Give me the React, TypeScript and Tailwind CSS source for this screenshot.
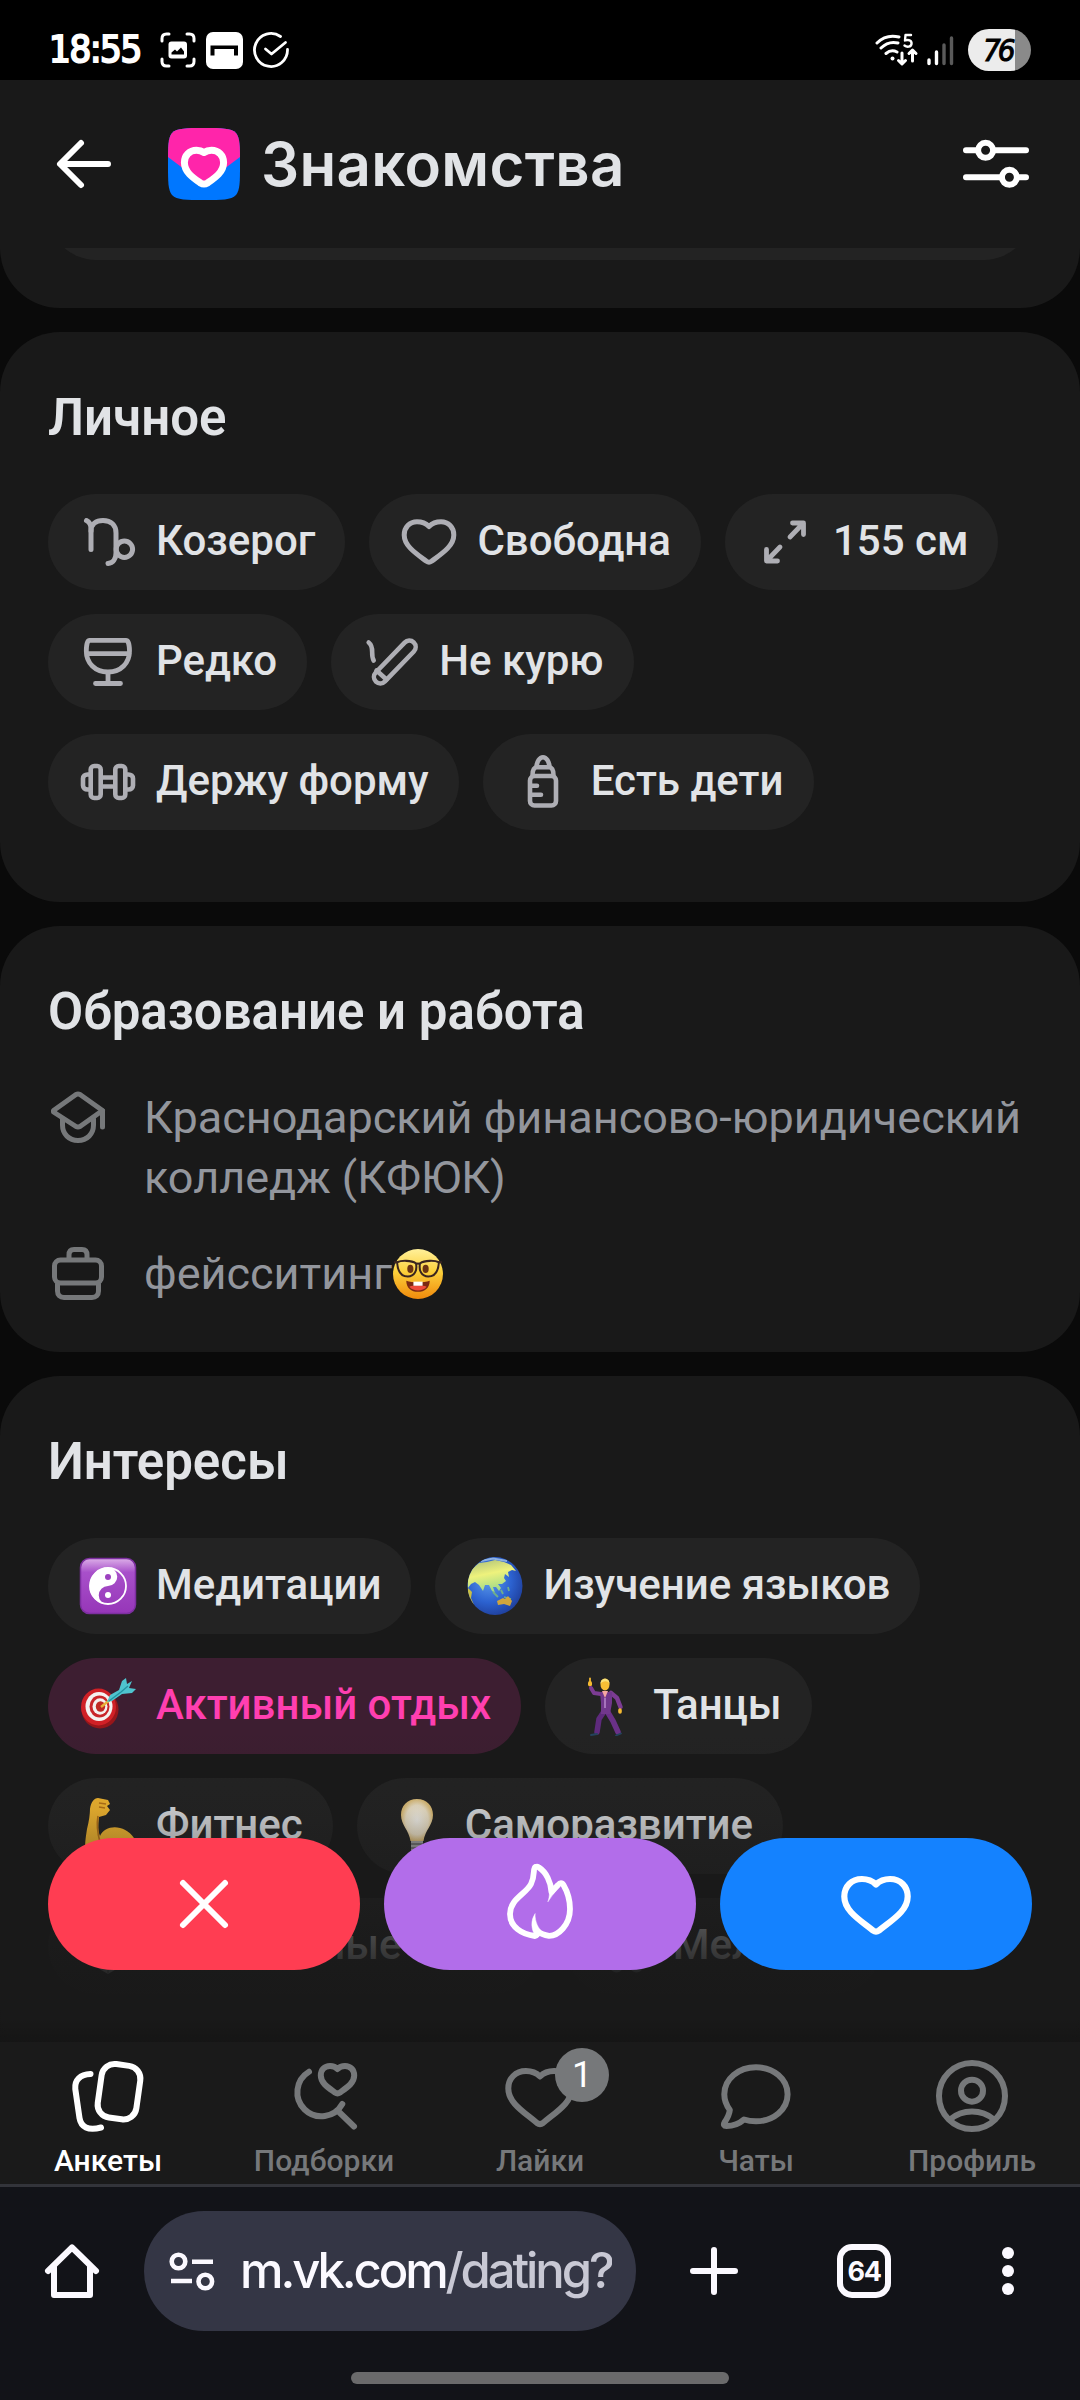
import type { ReactNode } from "react";
import clsx from "clsx";

function Svg(props: {
  w: number;
  h?: number;
  sw?: number;
  className?: string;
  children: ReactNode;
}) {
  const h = props.h ?? props.w;
  return (
    <svg
      width={props.w}
      height={h}
      viewBox={`0 0 ${props.w} ${h}`}
      fill="none"
      stroke="currentColor"
      strokeWidth={props.sw ?? 5}
      strokeLinecap="round"
      strokeLinejoin="round"
      className={clsx("shrink-0", props.className)}
    >
      {props.children}
    </svg>
  );
}

/* ---------- chip icons ---------- */

function CapricornIcon() {
  return (
    <Svg w={60}>
      <path d="M8.5 8.5C11.5 10 13 13 13 17V37.5" />
      <path d="M13 19C13 12 18 8.5 25 8.5C33 8.5 38 13 38 21V41C38 47 35 51 30 51.5" />
      <circle cx="46.4" cy="37.3" r="8.2" />
    </Svg>
  );
}

function HeartIcon() {
  return (
    <Svg w={60}>
      <path d="M30 14.5C26.5 11 22 9.8 18 9.8C10.5 9.8 5.2 15.5 5.2 23C5.2 34 17 41.5 27.5 49.3C29.2 50.5 30.8 50.5 32.5 49.3C43 41.5 54.8 34 54.8 23C54.8 15.5 49.5 9.8 42 9.8C38 9.8 33.5 11 30 14.5Z" />
    </Svg>
  );
}

function ResizeIcon() {
  return (
    <Svg w={60} sw={4.8}>
      <path d="M37.5 11H48.5V22.500M48 11.5L35 25" />
      <path d="M22.5 49H11.5V37.5M12 48.5L25 35" />
    </Svg>
  );
}

function WineIcon() {
  return (
    <Svg w={60} sw={4.8}>
      <path d="M11.5 8.3H48C50.5 8.3 51.5 14 51.5 19C51.5 31 43 40 30 40C17 40 8.3 31 8.3 19C8.3 14 9.3 8.3 11.5 8.3Z" />
      <path d="M9 21.7H51M30 41V51M17.5 51.5H42.5" />
    </Svg>
  );
}

function CigaretteIcon() {
  return (
    <Svg w={60} sw={4.6}>
      <rect x="-27.2" y="-6.4" width="54.4" height="12.8" rx="6.4" transform="translate(33.8 30) rotate(-46)" />
      <path d="M15.5 38.5L25.5 47.5" />
      <path d="M7.7 10.5C14 15.5 9 22 12.7 28.5" />
    </Svg>
  );
}

function DumbbellIcon() {
  return (
    <Svg w={60} sw={4.6}>
      <rect x="12.7" y="14" width="10" height="32" rx="3.5" />
      <rect x="37.3" y="14" width="10" height="32" rx="3.5" />
      <path d="M24 25.500H36M24 34.5H36" />
      <path d="M11.5 22.5H9.500C7 22.5 5 24 5 26.5V33.5C5 36 7 37.5 9.5 37.5H11.5" />
      <path d="M48.5 22.5H50.5C53 22.5 55 24 55 26.5V33.5C55 36 53 37.5 50.5 37.5H48.5" />
    </Svg>
  );
}

function BottleIcon() {
  return (
    <Svg w={60} sw={4.6}>
      <rect x="17" y="24" width="26" height="29.5" rx="4.5" />
      <path d="M19.5 23.5C19.5 19 20.5 15.3 24 15.3H36C39.5 15.3 40.5 19 40.5 23.5" />
      <path d="M23.5 14.5C24 9.5 26.5 5.2 30 5.2C33.5 5.2 36 9.5 36.5 14.5" />
      <path d="M18 33.7H24M18 42.7H28" />
    </Svg>
  );
}

/* ---------- emoji ---------- */

function YinYangEmoji() {
  return (
    <svg width="60" height="60" viewBox="0 0 60 60" className="shrink-0">
      <defs>
        <linearGradient id="yy" x1="0" y1="0" x2="0" y2="1">
          <stop offset="0" stopColor="#dcaee8" />
          <stop offset=".25" stopColor="#a850ca" />
          <stop offset="1" stopColor="#9636b8" />
        </linearGradient>
      </defs>
      <rect x="2.5" y="2.5" width="55" height="55" rx="9" fill="url(#yy)" stroke="#7d2fa0" strokeWidth="1.500" />
      <circle cx="30" cy="30" r="18" fill="none" stroke="#fff" strokeWidth="1.800" />
      <path d="M30 11.5A18.5 18.5 0 0 0 30 48.5A9.25 9.25 0 0 1 30 30A9.25 9.25 0 0 0 30 11.5Z" fill="#fff" />
      <circle cx="30" cy="21" r="3" fill="#9d42c0" />
      <circle cx="30" cy="39" r="3" fill="#fff" />
    </svg>
  );
}

function GlobeEmoji() {
  return (
    <svg width="60" height="60" viewBox="0 0 60 60" className="shrink-0">
      <defs>
        <radialGradient id="sea" cx=".4" cy=".4" r=".62">
          <stop offset="0" stopColor="#5d9cec" />
          <stop offset=".6" stopColor="#2c62d0" />
          <stop offset="1" stopColor="#1f3f9c" />
        </radialGradient>
        <linearGradient id="land" x1="0" y1="0" x2=".3" y2="1">
          <stop offset="0" stopColor="#a9bd7a" />
          <stop offset=".5" stopColor="#eef27c" />
          <stop offset="1" stopColor="#9fd98a" />
        </linearGradient>
        <clipPath id="globe">
          <ellipse cx="30" cy="30" rx="27.5" ry="29" />
        </clipPath>
      </defs>
      <g clipPath="url(#globe)">
        <rect width="60" height="60" fill="url(#sea)" />
        <path d="M6 14L14 7L22 6L30 4L39 6L46 9L51 15L47 14L43 16L44 21L40 18L39 22L41 25L37 28L33 28L36 32L34 35L31 31L28 31L30 37L27 35L24 29L20 29L18 35L14 29L10 26L6 28L3 32L2 22Z" fill="url(#land)" />
        <path d="M3 32L7 36L6 42L9 49L3 45Z" fill="#c9bf45" />
        <path d="M28 36L33 41M36 34L38 38M39 41L46 43M43 31L44 35" stroke="#6fae8b" strokeWidth="1.800" />
        <path d="M32 45L38 42L40 43L43 40L47 45L45 50L39 48L33 49Z" fill="#d0a53c" />
        <path d="M16 5L28 2.500L42 5" stroke="#8fb1e0" strokeWidth="2" fill="none" />
      </g>
    </svg>
  );
}

function DartEmoji() {
  return (
    <svg width="60" height="60" viewBox="0 0 60 60" className="shrink-0">
      <ellipse cx="22" cy="33.5" rx="18.5" ry="19" fill="#97161a" />
      <ellipse cx="20.5" cy="31" rx="17.5" ry="18.5" fill="#d02026" />
      <ellipse cx="21" cy="30.5" rx="13.5" ry="14.5" fill="#f4f1f0" />
      <ellipse cx="21.5" cy="30.5" rx="10" ry="11" fill="#c9252a" />
      <ellipse cx="22" cy="30.5" rx="7.500" ry="8.2" fill="#f4f1f0" />
      <ellipse cx="22.5" cy="30.5" rx="4.700" ry="5.200" fill="#c02a25" />
      <path d="M23 31L33 23" stroke="#e8b23a" strokeWidth="2.500" />
      <path d="M29 26L32 19L41 14L44 5L48 2L49 8L54 5L51 12L58 13L54 17L44 18L34 25Z" fill="#4fc4cf" />
      <path d="M31 25L43 16L50 10" stroke="#2193a2" strokeWidth="1.300" fill="none" />
    </svg>
  );
}

function DancerEmoji() {
  return (
    <svg width="60" height="60" viewBox="0 0 60 60" className="shrink-0">
      <g strokeLinecap="round" strokeLinejoin="round" fill="none">
        <path d="M15 8V2.500" stroke="#f4b931" strokeWidth="1.800" />
        <path d="M15 7V8.500" stroke="#f4b931" strokeWidth="4" />
        <path d="M16 12L19 17L26 18" stroke="#7c3c93" strokeWidth="4" />
        <path d="M36 17L42 22L45.500 31" stroke="#7c3c93" strokeWidth="4.500" />
        <path d="M45 34V36" stroke="#f4b931" strokeWidth="3.600" />
        <path d="M30 34L24 43L22 56" stroke="#5e2a7c" strokeWidth="5.500" />
        <path d="M32 35L38 45L43 56" stroke="#6a3188" strokeWidth="5.500" />
        <path d="M22 58L16 59M41 59.500L46 57.500" stroke="#24435e" strokeWidth="1.800" />
      </g>
      <path d="M25 16H37L37 27L35 38H26L26 27Z" fill="#71378c" />
      <path d="M27 15L30 22L33 15Z" fill="#f7a7a2" />
      <path d="M30 22V32" stroke="#b888cc" strokeWidth="1.500" />
      <ellipse cx="30" cy="8.5" rx="4.500" ry="6" fill="#f6bf35" />
      <path d="M25.500 8C25 1 35 1 34.500 8C33 4 27 5 25.500 8Z" fill="#f9e27a" />
    </svg>
  );
}

function BicepsEmoji() {
  return (
    <svg width="60" height="60" viewBox="0 0 60 60" className="shrink-0">
      <path d="M12 13C13 6 16 2 20 2L30 4L32 8L29 10L32 14L28 19L21 21C20 30 20 35 22 40C27 28 47 28 56 42V58H8C6 50 8 40 9 33C11 25 12 18 12 13Z" fill="#fcbd30" />
      <path d="M21 7L28 8M21 11L27 12M20 20C18 31 20 39 22 46" stroke="#bd7716" strokeWidth="1.600" fill="none" />
    </svg>
  );
}

function BulbEmoji() {
  return (
    <svg width="60" height="60" viewBox="0 0 60 60" className="shrink-0">
      <defs>
        <radialGradient id="bulb">
          <stop offset="0" stopColor="#fffdf6" />
          <stop offset=".7" stopColor="#f8ecd0" />
          <stop offset="1" stopColor="#e6c57c" />
        </radialGradient>
      </defs>
      <path d="M30 3C20 3 14 10 14 19C14 29 22 34 23.5 45H36.500C38 34 46 29 46 19C46 10 40 3 30 3Z" fill="url(#bulb)" />
      <path d="M24 45H36V54L33 58H27L24 54Z" fill="#a9a9a9" />
      <path d="M24 48H36M24 52H36" stroke="#666" strokeWidth="1.500" />
    </svg>
  );
}

function DieEmoji() {
  return (
    <svg width="60" height="60" viewBox="0 0 60 60" className="shrink-0">
      <path d="M30 3L54 14V44L30 58L6 44V14Z" fill="#d9d9dc" />
      <path d="M6 14L30 26L54 14M30 26V58" stroke="#9a9a9f" strokeWidth="2" fill="none" />
      <circle cx="30" cy="14" r="4" fill="#d3262d" />
    </svg>
  );
}

function NotesEmoji() {
  return (
    <svg width="60" height="60" viewBox="0 0 60 60" className="shrink-0">
      <path d="M26 50V16L46 10V50" stroke="#8d9aa6" strokeWidth="3.500" fill="none" />
      <ellipse cx="21.5" cy="51.5" rx="6" ry="5" fill="#8d9aa6" />
      <ellipse cx="41.5" cy="51.5" rx="6" ry="5" fill="#8d9aa6" />
    </svg>
  );
}

function NerdEmoji() {
  return (
    <svg width="52" height="52" viewBox="0 0 51 51" className="shrink-0">
      <defs>
        <linearGradient id="face" x1="0" y1="0" x2="0" y2="1">
          <stop offset="0" stopColor="#fff09a" />
          <stop offset=".45" stopColor="#fcd13b" />
          <stop offset="1" stopColor="#f08a0c" />
        </linearGradient>
      </defs>
      <circle cx="25.5" cy="25.5" r="24.5" fill="url(#face)" />
      <path d="M14 32C20 34 31 34 37 32C37 39 32 43 25.5 43C19 43 14 39 14 32Z" fill="#7c2a12" />
      <path d="M17 38C21 43 30 43 34 38C30 36 21 36 17 38Z" fill="#ee4a3a" />
      <path d="M21 33H30V37H21Z" fill="#fff" />
      <ellipse cx="18" cy="20.5" rx="3" ry="4" fill="#6b3413" />
      <ellipse cx="33" cy="20.5" rx="3" ry="4" fill="#6b3413" />
      <g fill="none" stroke="#3a2520" strokeWidth="2">
        <path d="M5 14C9 12 19 12 23.500 15C25 22 22 28 15.500 28C8 28 5.500 22 5 14Z" />
        <path d="M46 14C42 12 32 12 27.500 15C26 22 29 28 35.500 28C43 28 45.500 22 46 14Z" />
        <path d="M2 14H5M46 14H49M23.500 16C25 14.800 26 14.800 27.500 16" />
      </g>
    </svg>
  );
}

/* ---------- building blocks ---------- */

function Card(props: { title: string; className?: string; children: ReactNode }) {
  return (
    <section className={clsx("shrink-0 rounded-[60px] bg-[#191919] px-12 pt-14", props.className)}>
      <h2 className="text-[51px] leading-[60px] font-semibold text-[#e1e3e6]">{props.title}</h2>
      {props.children}
    </section>
  );
}

function Chip(props: { icon: ReactNode; label: string; active?: boolean }) {
  return (
    <div
      className={clsx(
        "flex h-24 items-center gap-[18px] rounded-full px-[30px] text-[42px] leading-[54px] font-medium whitespace-nowrap",
        props.active ? "bg-[#3d1e31] text-[#ff3fb0]" : "bg-[#232323] text-[#e1e3e6]",
      )}
    >
      <span className="text-[#aeaeb4]">{props.icon}</span>
      <span className="-mt-[3px]">{props.label}</span>
    </div>
  );
}

function ChipRow(props: { children: ReactNode }) {
  return <div className="flex gap-6">{props.children}</div>;
}

function Tab(props: { label: string; active?: boolean; icon: ReactNode; badge?: string }) {
  return (
    <div
      className={clsx(
        "flex flex-1 flex-col items-center pt-3 text-[30px] leading-9 font-medium",
        props.active ? "text-white" : "text-[#76787a]",
      )}
    >
      <div className="relative">
        {props.icon}
        {props.badge && (
          <span className="absolute -top-[6px] left-[57px] flex size-[54px] items-center justify-center rounded-full bg-[#76787a] text-[36px] font-normal text-white">
            {props.badge}
          </span>
        )}
      </div>
      <span className="mt-[5px]">{props.label}</span>
    </div>
  );
}

/* ---------- screen parts ---------- */

function StatusBar() {
  return (
    <div className="flex h-20 shrink-0 items-center bg-black px-[49px] text-white">
      <span className="mt-[17px] w-[92px] font-['DejaVu_Sans_Condensed','DejaVu_Sans',sans-serif] text-[38px] leading-[44px] tracking-[-1.3px] whitespace-nowrap [-webkit-text-stroke:2px_white]">
        18:55
      </span>
      <Svg w={36} sw={3} className="mt-5 ml-[19px]">
        <path d="M2 9V6.500Q2 2 6.500 2H9M27 2H29.500Q34 2 34 6.500V9M34 27V29.500Q34 34 29.500 34H27M9 34H6.500Q2 34 2 29.500V27" />
        <rect x="8.5" y="9.5" width="18.5" height="17" rx="3" fill="currentColor" stroke="none" />
        <path d="M11.5 22.5V20.500L15 17.500L17 19.500L21 15.500L24 19.500V22.500Z" fill="#000" stroke="none" />
      </Svg>
      <Svg w={37} sw={0} className="mt-5 ml-[10px]">
        <rect width="37" height="37" rx="7" fill="currentColor" />
        <path d="M4.5 13.5H32V23.500H28V17H8.500V23.500H4.500Z" fill="#000" />
      </Svg>
      <Svg w={37} sw={2.8} className="mt-5 ml-[10px]">
        <path d="M27.5 4.500A16.500 16.500 0 1 0 34.500 17.500" />
        <path d="M12.5 17L18.500 22L32.500 10.500" />
      </Svg>
      <div className="mt-5 ml-auto flex items-center">
        <Svg w={44} h={34} sw={3}>
          <path d="M2 10C8 4 16 2 24 4M6 15C11 10 17 8.500 23 10M11 20.500C14.500 17.500 18 17 22 19" />
          <circle cx="17.5" cy="25.5" r="2" fill="currentColor" stroke="none" />
          <path d="M27 20V30.500M23.500 27.500L27 31L30.500 27.500M37.500 28V17.500M34 20.500L37.500 17L41 20.500" />
          <path d="M36 2H30.500L30 7.500C34 6 37 8 36.500 11C36 14 32 14.500 29.500 12.500" strokeWidth="2.400" />
        </Svg>
        <Svg w={28} h={32} sw={3.4} className="ml-[7px]">
          <path d="M3 26V29.500M10.500 18V29.500" />
          <path d="M18 11V29.500M25.500 4V29.500" stroke="#5a5a5a" />
        </Svg>
        <div className="ml-[14px] flex h-[42px] w-[63px] items-center overflow-hidden rounded-full bg-[linear-gradient(90deg,#ececec_75%,#8a8a8a_75%)] pl-[15px]">
          <span className="font-['DejaVu_Sans_Condensed','DejaVu_Sans',sans-serif] text-[31px] leading-none tracking-[-3px] text-black italic [-webkit-text-stroke:1px_black]">
            76
          </span>
        </div>
      </div>
    </div>
  );
}

function Header() {
  return (
    <header className="flex h-[168px] shrink-0 items-center bg-[#191919] px-12">
      <Svg w={72} sw={6} className="text-white">
        <path d="M60 36H13M33 15L12 36L33 57" />
      </Svg>
      <svg width="72" height="72" viewBox="0 0 72 72" className="ml-12 shrink-0">
        <defs>
          <clipPath id="logo">
            <path d="M0 36C0 18 0 10 4 5C9 0 18 0 36 0S63 0 68 5C72 10 72 18 72 36S72 62 68 67C63 72 54 72 36 72S9 72 4 67C0 62 0 54 0 36Z" />
          </clipPath>
        </defs>
        <g clipPath="url(#logo)">
          <rect width="72" height="72" fill="#0077ff" />
          <path d="M0 0H72V29L36 56L0 29Z" fill="#ff25aa" />
        </g>
        <path
          d="M36 24.5C33.5 22.8 31 22.3 28.5 22.3C21.5 22.3 16.4 27.5 16.4 34.5C16.4 44.5 26 50.5 32.5 55C35 56.5 37 56.5 39.500 55C46 50.5 55.600 44.5 55.600 34.5C55.600 27.5 50.5 22.3 43.5 22.3C41 22.3 38.5 22.8 36 24.5Z"
          fill="#ff25aa"
          stroke="#fff"
          strokeWidth="7"
          strokeLinejoin="round"
        />
      </svg>
      <h1 className="ml-[21px] font-[Inter,sans-serif] text-[60px] leading-[72px] font-semibold tracking-[0.3px] text-[#e1e3e6]">
        Знакомства
      </h1>
      <Svg w={72} sw={6} className="ml-auto text-white">
        <path d="M6 22.300H18M35 22.300H66M6 49.300H42M59 49.300H66" />
        <circle cx="25.6" cy="22.3" r="7.500" />
        <circle cx="49.4" cy="49.3" r="7.500" />
      </Svg>
    </header>
  );
}

function ActionButtons() {
  return (
    <div className="absolute inset-x-0 bottom-0 flex h-[300px] gap-6 px-12 pt-24 text-white">
      <button type="button" className="flex h-[132px] flex-1 items-center justify-center rounded-full bg-[#ff3d52]">
        <Svg w={60} sw={6}>
          <path d="M9 9L51 51M51 9L9 51" />
        </Svg>
      </button>
      <button type="button" className="flex h-[132px] flex-1 items-center justify-center rounded-full bg-[#b26dea]">
        <Svg w={100} sw={5.8}>
          <path d="M45.5 13C42.5 14 45.5 21 41 30C36 40 20 45 20 60C20 73 32 80.5 45 82C46.5 82 47 80.5 48 79.5" />
          <path d="M48 77.500C51 80 54 81 59 81.800C68 82 80 71 80 55C80 46 77 37 73.500 31C72 28.500 70 28.500 68 31L61.500 38C61 28 56 18 49 13.500C48 12.500 46.500 12.500 45.500 13" />
          <path d="M45 60C40.500 66 41 76 45.500 81.500L53 79C48 74 45 68 45 60Z" fill="currentColor" strokeWidth="0.500" />
          <path d="M58 47.500C60 42 59.500 38 59 33L65 37Z" fill="currentColor" strokeWidth="0.500" />
        </Svg>
      </button>
      <button type="button" className="flex h-[132px] flex-1 items-center justify-center rounded-full bg-[#1482ff]">
        <Svg w={84} sw={6.2}>
          <path d="M42 22.5C38 18.5 33 17 28 17C17.5 17 10.3 24.5 10.3 34.5C10.3 49 26 58 39 68.5C41 70 43 70 45 68.5C58 58 73.7 49 73.7 34.5C73.7 24.5 66.5 17 56 17C51 17 46 18.5 42 22.5Z" />
        </Svg>
      </button>
    </div>
  );
}

function TabBar() {
  return (
    <nav className="flex h-[142px] shrink-0 bg-[#1a1a1a]">
      <Tab
        active
        label="Анкеты"
        icon={
          <Svg w={84} sw={6}>
            <rect x="-19.5" y="-27" width="39" height="54" rx="13" transform="translate(53 37.7) rotate(8)" />
            <path d="M24.5 20C14 20.5 8.5 26 9.3 35L13.5 64C15 73 22 77 35 73.5" />
          </Svg>
        }
      />
      <Tab
        label="Подборки"
        icon={
          <Svg w={84} sw={6}>
            <path d="M27 17.7A24 24 0 1 0 60.3 50M56 57L72 72.5" />
            <path d="M55.5 15C53.5 12.8 51 12 48 12C42.5 12 38.8 15.8 38.8 21.5C38.8 29 46 33.5 53 38.5C54.5 39.5 56.5 39.5 58 38.5C65 33.5 72.2 29 72.2 21.5C72.2 15.8 68.5 12 63 12C60 12 57.5 12.8 55.5 15Z" />
          </Svg>
        }
      />
      <Tab
        label="Лайки"
        badge="1"
        icon={
          <Svg w={84} sw={6}>
            <path d="M42 22.5C38 18.5 33 17 28 17C17.5 17 10.3 24.5 10.3 34.5C10.3 49 26 58 39 69C41 70.5 43 70.5 45 69C58 58 73.7 49 73.7 34.5C73.7 24.5 66.5 17 56 17C51 17 46 18.5 42 22.5Z" />
          </Svg>
        }
      />
      <Tab
        label="Чаты"
        icon={
          <Svg w={84} sw={6}>
            <path d="M42 13.3C59.5 13.3 73.6 25 73.6 40.3C73.6 55.5 59.5 67.3 42 67.3C37.5 67.3 33.5 66.7 30 65.5C25.5 69.5 20 72 12.5 72C10 72 9.3 70.5 10.5 68.5C13.5 64 15.5 59.5 15.8 56C12.5 51.5 10.3 46 10.3 40.3C10.3 25 24.5 13.3 42 13.3Z" />
          </Svg>
        }
      />
      <Tab
        label="Профиль"
        icon={
          <Svg w={84} sw={6}>
            <circle cx="42" cy="42" r="33" />
            <circle cx="42" cy="36.7" r="11" />
            <path d="M20 65.5C27 59.5 34 57.5 42 57.5C50 57.5 57 59.5 64 65.5" />
          </Svg>
        }
      />
    </nav>
  );
}

function BrowserBar() {
  return (
    <footer className="flex grow flex-col items-center border-t-[3px] border-[#33343a] bg-[#121318] text-[#fbf9ff]">
      <div className="mt-6 flex h-[120px] w-full items-center pl-9">
        <Svg w={72} sw={6}>
          <path d="M12 36L36 12.5L60 36" />
          <path d="M18 32V60H54V32" />
        </Svg>
        <div className="ml-9 flex h-[120px] w-[492px] items-center rounded-full bg-[#343645] pl-6">
          <Svg w={48} sw={4.6} className="[&_path]:[stroke-linecap:butt]">
            <circle cx="10.5" cy="14.5" r="6.8" />
            <path d="M24 14.700H45M3 34H24" />
            <circle cx="37.3" cy="34.5" r="6.8" />
          </Svg>
          <div className="ml-6 w-[372px] overflow-hidden pb-px font-[Inter,sans-serif] text-[49px] leading-[66px] font-medium tracking-[-3.1px] whitespace-nowrap">
            m.vk.com<span className="text-[#c8c8d4]">/dating?</span>
          </div>
        </div>
        <Svg w={72} sw={6} className="ml-[42px]">
          <path d="M36 15V57M15 36H57" />
        </Svg>
        <div className="ml-[87px] flex size-[54px] items-center justify-center rounded-[15px] border-[6px] border-[#fbf9ff] font-[Inter,sans-serif] text-[27px] leading-none font-bold tracking-[-1.5px]">
          64
        </div>
        <svg width="72" height="72" viewBox="0 0 72 72" fill="currentColor" className="ml-[81px]">
          <circle cx="36" cy="18" r="6" />
          <circle cx="36" cy="36" r="6" />
          <circle cx="36" cy="54" r="6" />
        </svg>
      </div>
      <div className="mt-[41px] h-3 w-[378px] rounded-full bg-[#6a6a6b]" />
    </footer>
  );
}

export default function App() {
  return (
    <div className="flex h-[2400px] w-[1080px] flex-col overflow-hidden bg-black font-[Roboto,sans-serif]">
      <StatusBar />
      <Header />

      <main className="relative flex h-[1794px] shrink-0 flex-col gap-6 overflow-hidden bg-[#0a0a0a]">
        {/* tail of the previous card */}
        <div className="-mt-[100px] flex h-40 shrink-0 flex-col justify-end rounded-[60px] bg-[#191919] px-12 pb-12">
          <div className="h-[112px] rounded-[48px] bg-[#232323]" />
        </div>

        <Card title="Личное" className="h-[570px]">
          <div className="mt-[46px] flex flex-col gap-6">
            <ChipRow>
              <Chip icon={<CapricornIcon />} label="Козерог" />
              <Chip icon={<HeartIcon />} label="Свободна" />
              <Chip icon={<ResizeIcon />} label="155 см" />
            </ChipRow>
            <ChipRow>
              <Chip icon={<WineIcon />} label="Редко" />
              <Chip icon={<CigaretteIcon />} label="Не курю" />
            </ChipRow>
            <ChipRow>
              <Chip icon={<DumbbellIcon />} label="Держу форму" />
              <Chip icon={<BottleIcon />} label="Есть дети" />
            </ChipRow>
          </div>
        </Card>

        <Card title="Образование и работа" className="h-[426px]">
          <div className="mt-[46px] flex flex-col gap-9 text-[45px] leading-[60px] text-[#93969d]">
            <div className="flex gap-9">
              <Svg w={60} sw={5} className="-mt-[3px] text-[#76787a]">
                <path d="M5.5 25.5L28 9.5Q30 8.5 32 9.5L54.5 25.5L32 41.5Q30 42.5 28 41.5L5.5 27Z" />
                <path d="M14.5 34V40C14.5 49 21 55.5 30 55.5C39 55.5 45.5 49 45.5 40V34M54.5 26V42" />
              </Svg>
              <p>Краснодарский финансово-юридический колледж (КФЮК)</p>
            </div>
            <div className="flex gap-9">
              <Svg w={60} sw={5} className="-mt-[3px] text-[#76787a]">
                <rect x="6.5" y="19" width="47" height="23" rx="6" />
                <path d="M21 18V14C21 10 23 8.5 26 8.5H34C37 8.5 39 10 39 14V18M9.5 43V50C9.5 54 12 56.5 16 56.5H44C48 56.5 50.5 54 50.5 50V43" />
              </Svg>
              <p className="flex items-center">
                фейсситинг
                <NerdEmoji />
              </p>
            </div>
          </div>
        </Card>

        <Card title="Интересы" className="h-[690px]">
          <div className="mt-[46px] flex flex-col gap-6">
            <ChipRow>
              <Chip icon={<YinYangEmoji />} label="Медитации" />
              <Chip icon={<GlobeEmoji />} label="Изучение языков" />
            </ChipRow>
            <ChipRow>
              <Chip active icon={<DartEmoji />} label="Активный отдых" />
              <Chip icon={<DancerEmoji />} label="Танцы" />
            </ChipRow>
            <ChipRow>
              <Chip icon={<BicepsEmoji />} label="Фитнес" />
              <Chip icon={<BulbEmoji />} label="Саморазвитие" />
            </ChipRow>
            <ChipRow>
              <Chip icon={<DieEmoji />} label="Настольные игры" />
              <Chip icon={<NotesEmoji />} label="Мелодии" />
            </ChipRow>
          </div>
        </Card>

        {/* fade under the floating buttons */}
        <div className="absolute inset-x-0 bottom-0 h-[312px] bg-[linear-gradient(180deg,#19191900_0px,#1919190d_30px,#19191926_80px,#19191947_105px,#191919c4_205px,#191919f2_250px,#191919_312px)]" />
        <div className="absolute inset-x-0 bottom-0 h-6 bg-linear-to-b from-transparent to-black/15" />
        <ActionButtons />
      </main>

      <TabBar />
      <BrowserBar />
    </div>
  );
}
